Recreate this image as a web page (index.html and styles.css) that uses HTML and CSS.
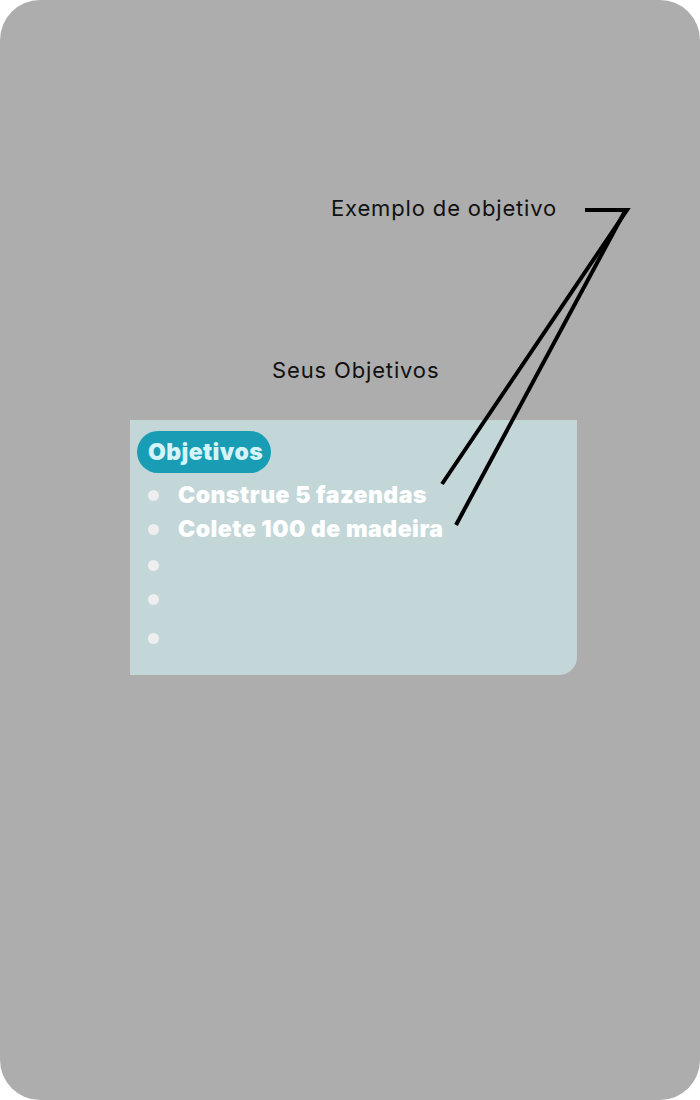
FILE: index.html
```html
<!DOCTYPE html>
<html lang="pt">
<head>
<meta charset="utf-8">
<title>Objetivos</title>
<link rel="stylesheet" href="styles.css">
</head>
<body>
<div class="frame">
  <div class="example-label">Exemplo de objetivo</div>
  <div class="section-title">Seus Objetivos</div>
  <div class="card">
    <div class="pill">Objetivos</div>
    <ul class="goals">
      <li class="goal">Construe 5 fazendas</li>
      <li class="goal">Colete 100 de madeira</li>
      <li class="goal goal-gap-sm"></li>
      <li class="goal"></li>
      <li class="goal goal-gap-lg"></li>
    </ul>
  </div>
  <svg class="annotation" width="700" height="1100" viewBox="0 0 700 1100">
    <polyline points="585,210 627,210 442,484" fill="none" stroke="#000" stroke-width="4" stroke-linejoin="miter"/>
    <line x1="625" y1="211" x2="456" y2="525" stroke="#000" stroke-width="4"/>
  </svg>
</div>
</body>
</html>
```
FILE: styles.css
```css
html, body {
  margin: 0;
  padding: 0;
  background: #ffffff;
}
.frame {
  position: relative;
  width: 700px;
  height: 1100px;
  background: #adadad;
  border-radius: 40px;
  box-sizing: border-box;
  padding-top: 195px;
  font-family: Inter, "Noto Sans", sans-serif;
  overflow: hidden;
}
.example-label {
  margin-left: 331px;
  font-size: 22px;
  line-height: 26px;
  letter-spacing: 0.85px;
  color: #111;
}
.section-title {
  margin-left: 272px;
  margin-top: 136px;
  font-size: 22px;
  line-height: 26px;
  letter-spacing: 0.85px;
  color: #111;
}
.card {
  margin-left: 130px;
  margin-top: 37px;
  width: 447px;
  height: 255px;
  background: #c3d6d8;
  border-bottom-right-radius: 18px;
  box-sizing: border-box;
  padding: 11px 0 0 7px;
}
.pill {
  display: inline-block;
  height: 42px;
  line-height: 42px;
  padding: 0 8px 0 11px;
  border-radius: 21px;
  background: #189db5;
  color: #d4f4f7;
  font-weight: 900;
  font-size: 23px;
  letter-spacing: 0.4px;
}
.goals {
  list-style: none;
  margin: 5px 0 0 0;
  padding: 0;
}
.goal {
  position: relative;
  height: 34px;
  line-height: 34px;
  padding-left: 41px;
  color: #ffffff;
  font-weight: 900;
  font-size: 23px;
  letter-spacing: 0.5px;
}
.goal::before {
  content: "";
  position: absolute;
  left: 11px;
  top: 12px;
  width: 11px;
  height: 11px;
  border-radius: 50%;
  background: #eeeeee;
}
.goal-gap-sm {
  margin-top: 2px;
}
.goal-gap-lg {
  margin-top: 5px;
}
.annotation {
  position: absolute;
  left: 0;
  top: 0;
  pointer-events: none;
}
```
